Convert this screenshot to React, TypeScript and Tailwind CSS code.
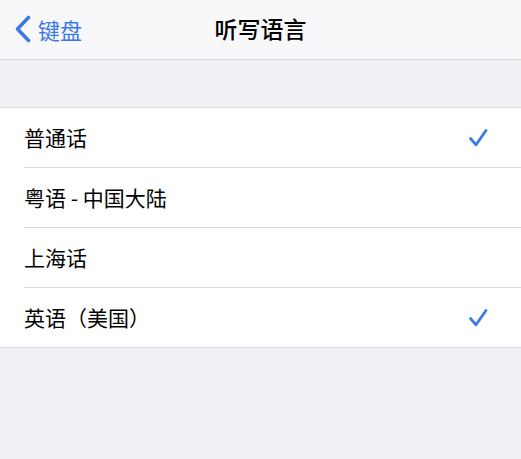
import React from 'react';

const FONT = { fontFamily: '"Noto Sans CJK SC", "Noto Sans", sans-serif' };

const languages = [
  { name: '普通话', checked: true },
  { name: '粤语 - 中国大陆', checked: false },
  { name: '上海话', checked: false },
  { name: '英语（美国）', checked: true },
];

const Check = () => (
  <svg width="20" height="20" viewBox="0 0 20 20" fill="none">
    <path d="M2.5 10.5 L8 16.8 L18 2.5" stroke="#3b7ae3" strokeWidth="2.8" strokeLinecap="round" strokeLinejoin="round" />
  </svg>
);

const App: React.FC = () => {
  return (
    <div className="w-[521px] h-[459px] bg-[#f0f0f5] overflow-hidden" style={FONT}>
      {/* nav bar */}
      <div className="h-[60px] bg-[#f8f8fa] border-b border-[#d6d6da] relative flex items-center justify-center pb-[2px]">
        <div className="absolute left-[14px] top-0 h-full flex items-center gap-[6px] text-[#3b7ae3] pb-[2px]">
          <svg width="18" height="28" viewBox="0 0 18 28" fill="none">
            <path d="M14.5 2.5 L3.5 14 L14.5 25.5" stroke="#3b7ae3" strokeWidth="3.6" strokeLinecap="round" strokeLinejoin="round" />
          </svg>
          <span className="text-[22px] leading-none">键盘</span>
        </div>
        <span className="text-[23px] font-medium text-black leading-none">听写语言</span>
      </div>

      <div className="h-[47px]" />

      {/* list */}
      <div className="bg-white border-y border-[#dcdce0]">
        {languages.map((lang, i) => {
          const last = i === languages.length - 1;
          return (
            <div key={lang.name} className="pl-[24px]">
              <div
                className={`flex items-center justify-between pr-[33px] ${
                  last ? 'h-[59px]' : 'h-[60px] border-b border-[#dcdce0]'
                }`}
              >
                <span className="text-[21px] text-black leading-none">{lang.name}</span>
                {lang.checked && <Check />}
              </div>
            </div>
          );
        })}
      </div>
    </div>
  );
};

export default App;
